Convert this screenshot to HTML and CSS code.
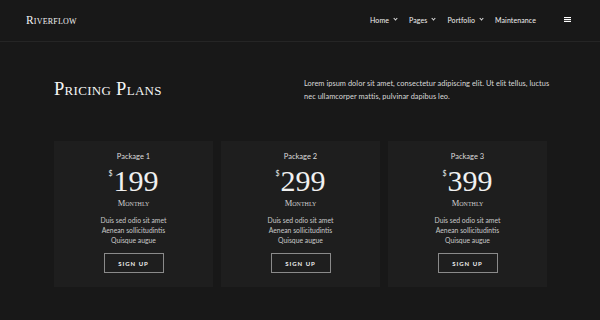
FILE: index.html
```html
<!DOCTYPE html>
<html lang="en">
<head>
    <meta charset="UTF-8">
    <meta name="viewport" content="width=device-width, initial-scale=1.0">
    <title>Riverflow - Pricing</title>
    <link rel="stylesheet" href="styles.css">
</head>
<body>
    <header class="site-header">
        <div class="logo">Riverflow</div>
        <nav class="main-nav">
            <a href="#">Home <span class="caret"></span></a>
            <a href="#">Pages <span class="caret"></span></a>
            <a href="#">Portfolio <span class="caret"></span></a>
            <a href="#">Maintenance</a>
        </nav>
        <button class="menu-toggle" aria-label="Menu">
            <svg width="7" height="5" viewBox="0 0 7 5">
                <rect x="0" y="0" width="7" height="1.1" fill="#fff"/>
                <rect x="0" y="2" width="7" height="1.1" fill="#fff"/>
                <rect x="0" y="3.9" width="7" height="1.1" fill="#fff"/>
            </svg>
        </button>
    </header>

    <main class="pricing">
        <div class="pricing-intro">
            <h1>Pricing Plans</h1>
            <p>Lorem ipsum dolor sit amet, consectetur adipiscing elit. Ut elit tellus, luctus nec ullamcorper mattis, pulvinar dapibus leo.</p>
        </div>

        <div class="plans">
            <div class="plan">
                <h3>Package 1</h3>
                <div class="price"><span class="currency">$</span>199</div>
                <div class="period">Monthly</div>
                <ul>
                    <li>Duis sed odio sit amet</li>
                    <li>Aenean sollicitudintis</li>
                    <li>Quisque augue</li>
                </ul>
                <a class="btn" href="#">Sign Up</a>
            </div>
            <div class="plan">
                <h3>Package 2</h3>
                <div class="price"><span class="currency">$</span>299</div>
                <div class="period">Monthly</div>
                <ul>
                    <li>Duis sed odio sit amet</li>
                    <li>Aenean sollicitudintis</li>
                    <li>Quisque augue</li>
                </ul>
                <a class="btn" href="#">Sign Up</a>
            </div>
            <div class="plan">
                <h3>Package 3</h3>
                <div class="price"><span class="currency">$</span>399</div>
                <div class="period">Monthly</div>
                <ul>
                    <li>Duis sed odio sit amet</li>
                    <li>Aenean sollicitudintis</li>
                    <li>Quisque augue</li>
                </ul>
                <a class="btn" href="#">Sign Up</a>
            </div>
        </div>
    </main>
</body>
</html>
```

FILE: styles.css
```css
:root {
    --bg-color: #181818;
    --card-color: #1e1e1e;
    --line-color: #252525;
    --text-color: #e6e6e6;
}
* {
    margin: 0;
    padding: 0;
    box-sizing: border-box;
}
body {
    font-family: 'Lato', 'Noto Sans', sans-serif;
    background: var(--bg-color);
    color: var(--text-color);
    height: 320px;
    overflow: hidden;
}

.site-header {
    height: 42px;
    display: flex;
    align-items: center;
    padding: 0 26px;
    border-bottom: 1px solid var(--line-color);
}

.logo {
    font-family: 'Liberation Serif', serif;
    font-variant: small-caps;
    font-size: 11.5px;
    letter-spacing: 0.2px;
    color: #f2f2f2;
    margin-top: -2px;
}

.main-nav {
    margin-left: auto;
    display: flex;
    gap: 12px;
    margin-top: -2px;
}

.main-nav a {
    color: #f0f0f0;
    text-decoration: none;
    font-size: 7px;
    letter-spacing: 0.1px;
    display: flex;
    align-items: center;
    gap: 3px;
}

.caret {
    width: 3px;
    height: 3px;
    border-right: 1px solid #ddd;
    border-bottom: 1px solid #ddd;
    transform: rotate(45deg);
    margin-top: -2px;
    margin-left: 2px;
}

.menu-toggle {
    background: none;
    border: none;
    margin-left: 28px;
    margin-right: 3px;
    display: flex;
    margin-top: -2px;
}

.pricing {
    padding: 0 53px 0 54px;
}

.pricing-intro {
    display: flex;
    align-items: center;
    height: 99px;
}

.pricing-intro h1 {
    flex: none;
    font-family: 'Liberation Serif', serif;
    font-variant: small-caps;
    font-weight: normal;
    font-size: 18.5px;
    letter-spacing: 0.3px;
    color: #f5f5f5;
    width: 250px;
    margin-top: -4px;
}

.pricing-intro p {
    flex: none;
    font-size: 7.4px;
    letter-spacing: 0.05px;
    line-height: 13px;
    color: #d8d8d8;
    width: 246px;
    margin-top: -4px;
}

.plans {
    display: grid;
    grid-template-columns: repeat(3, 1fr);
    gap: 8px;
}

.plan {
    background: var(--card-color);
    height: 146px;
    text-align: center;
    padding-top: 11px;
    display: flex;
    flex-direction: column;
    align-items: center;
}

.plan h3 {
    font-weight: normal;
    font-size: 7.5px;
    color: #dcdcdc;
}

.price {
    font-family: 'Liberation Serif', serif;
    font-size: 30px;
    line-height: 34px;
    color: #f0f0f0;
    margin-top: 3px;
}

.currency {
    font-family: 'Lato', sans-serif;
    font-size: 7px;
    vertical-align: top;
    line-height: 18px;
    margin-right: 1px;
}

.period {
    font-family: 'Liberation Serif', serif;
    font-variant: small-caps;
    font-size: 8.5px;
    line-height: 10px;
    color: #cfcfcf;
}

.plan ul {
    list-style: none;
    margin-top: 7px;
}

.plan li {
    font-size: 6.8px;
    line-height: 10px;
    color: #c8c8c8;
}

.btn {
    margin-top: 8px;
    width: 60px;
    height: 20px;
    border: 1px solid #8a8a8a;
    color: #eee;
    text-decoration: none;
    font-size: 6px;
    font-weight: 700;
    letter-spacing: 1px;
    text-transform: uppercase;
    display: flex;
    align-items: center;
    justify-content: center;
}
```
